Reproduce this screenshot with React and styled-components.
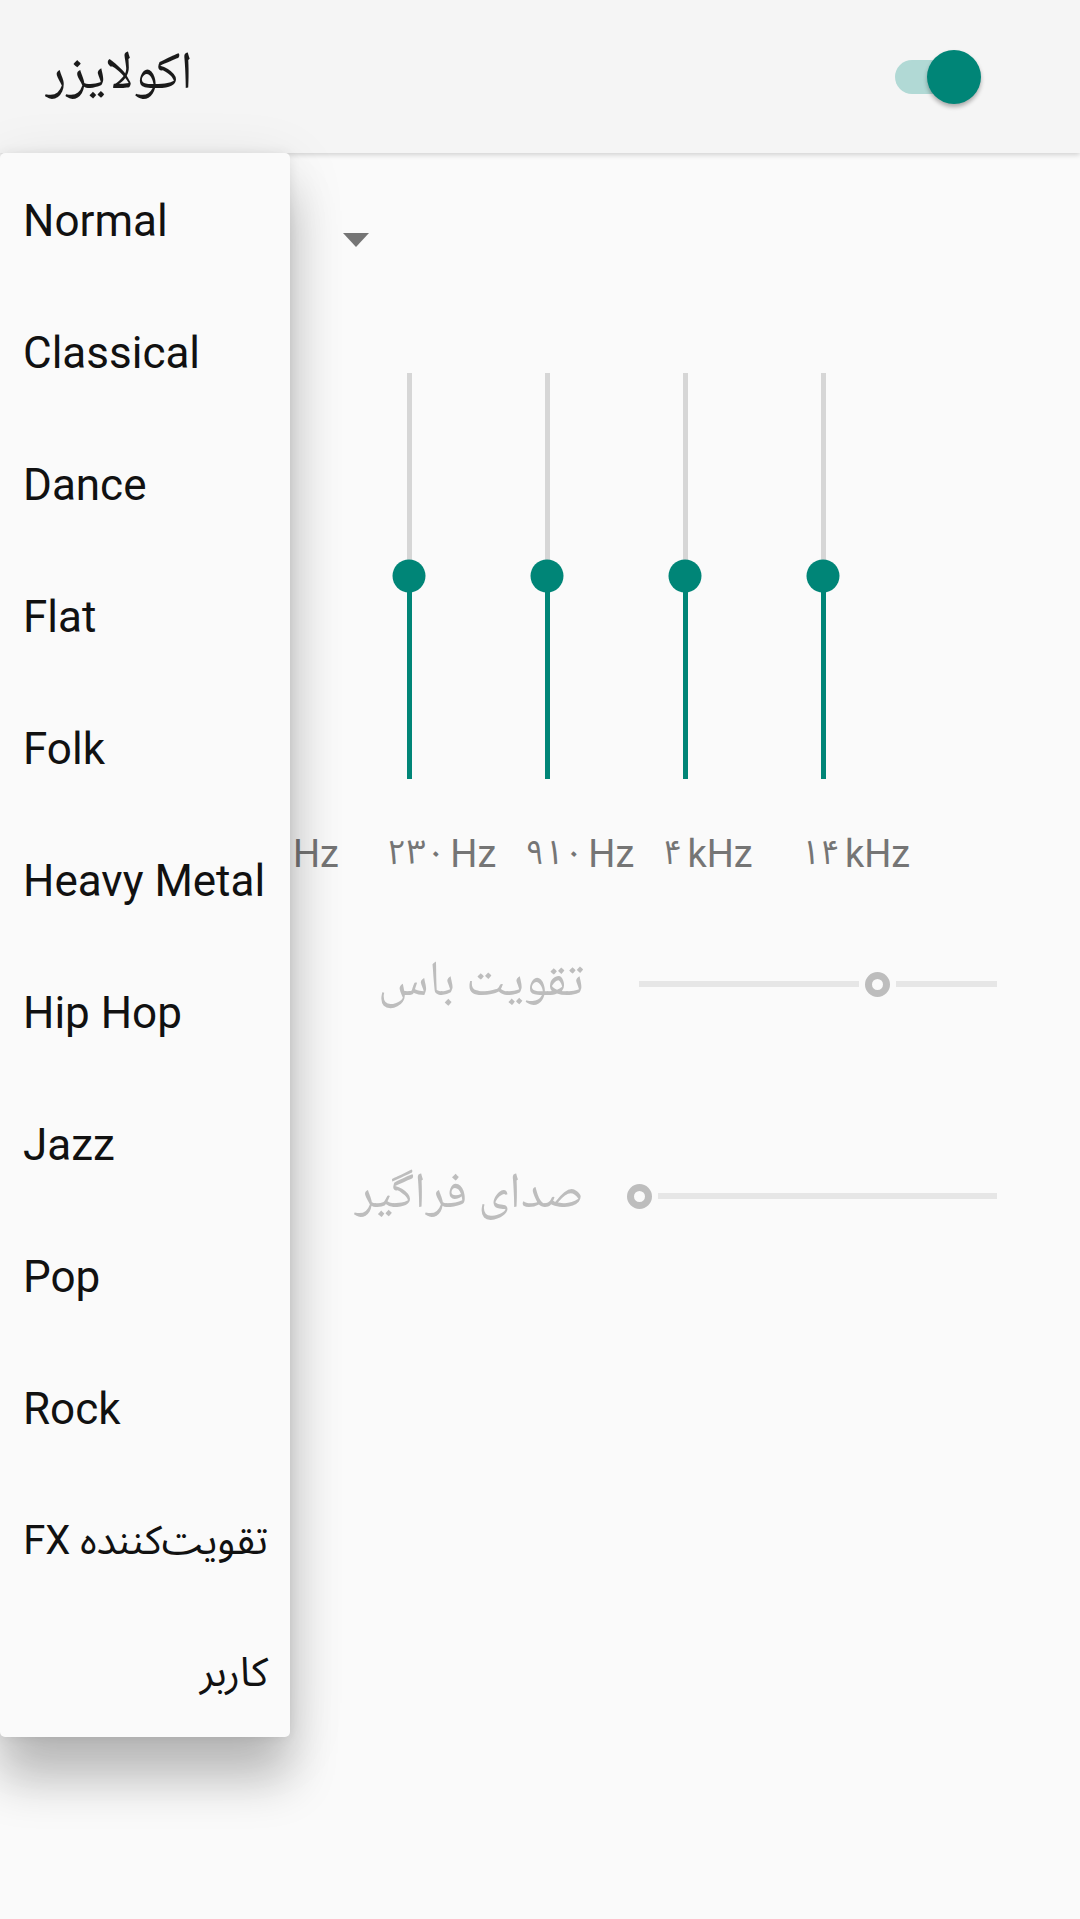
import styled, { createGlobalStyle } from "styled-components";

const TEAL = "#008577";

const GlobalStyle = createGlobalStyle`
  html, body {
    margin: 0;
    padding: 0;
    background: #fafafa;
  }
  body {
    font-family: Roboto, "Noto Sans", "Noto Sans Arabic", "DejaVu Sans", sans-serif;
  }
  * {
    box-sizing: border-box;
  }
`;

const Screen = styled.div`
  position: relative;
  min-height: 1919px;
  background: #fafafa;
  overflow: hidden;
`;

const AppBar = styled.header`
  position: relative;
  z-index: 1;
  height: 153px;
  display: flex;
  align-items: center;
  justify-content: space-between;
  padding: 0 99px 0 46px;
  background: #f5f5f5;
  box-shadow: 0 2px 5px rgba(0, 0, 0, 0.16);
`;

const Title = styled.h1`
  margin: 0;
  direction: rtl;
  font-family: "Noto Naskh Arabic", "Noto Sans Arabic", "DejaVu Sans", sans-serif;
  font-size: 53px;
  font-weight: 400;
  color: #1a1a1a;
`;

const Switch = styled.div`
  position: relative;
  width: 86px;
  height: 54px;
  display: flex;
  align-items: center;
`;

const SwitchTrack = styled.div`
  width: 80px;
  height: 34px;
  border-radius: 17px;
  background: #b1d9d5;
`;

const SwitchThumb = styled.div`
  position: absolute;
  right: 0;
  top: 0;
  width: 54px;
  height: 54px;
  border-radius: 50%;
  background: ${TEAL};
  box-shadow: 0 3px 4px rgba(0, 0, 0, 0.3);
`;

const Content = styled.main`
  display: flex;
  flex-direction: column;
`;

const SpinnerRow = styled.div`
  height: 174px;
  display: flex;
  align-items: center;
  padding-left: 343px;
`;

const Caret = styled.span`
  width: 0;
  height: 0;
  border-left: 13px solid transparent;
  border-right: 13px solid transparent;
  border-top: 14px solid #757575;
`;

const Bands = styled.div`
  margin-top: 46px;
  display: flex;
  padding-left: 202px;
`;

const Band = styled.div`
  width: 138px;
  display: flex;
  flex-direction: column;
`;

const VTrack = styled.div`
  position: relative;
  width: 5px;
  height: 406px;
  margin: 0 auto;
  display: flex;
  flex-direction: column;
`;

const VUpper = styled.div`
  flex: 1;
  background: #d6d6d6;
`;

const VLower = styled.div`
  height: ${(p) => p.$level * 100}%;
  background: ${TEAL};
`;

const VThumb = styled.div`
  position: absolute;
  left: 50%;
  bottom: ${(p) => p.$level * 100}%;
  width: 33px;
  height: 33px;
  border-radius: 50%;
  background: ${TEAL};
  transform: translate(-50%, 50%);
`;

const BandLabel = styled.div`
  margin-top: 50px;
  padding-left: 47px;
  font-size: 38px;
  line-height: 46px;
  color: #757575;
  white-space: nowrap;
`;

const Digits = styled.span`
  font-size: 34px;
  letter-spacing: -3px;
  vertical-align: 3px;
  margin-right: 5px;
`;

const EffectRow = styled.div`
  height: 100px;
  margin-top: ${(p) => p.$gap}px;
  display: flex;
  align-items: center;
  padding-left: 200px;
`;

const EffectLabel = styled.div`
  width: 384px;
  margin-right: 55px;
  direction: rtl;
  text-align: right;
  font-family: "Noto Naskh Arabic", "Noto Sans Arabic", "DejaVu Sans", sans-serif;
  font-size: 50px;
  color: #bdbdbd;
  white-space: nowrap;
`;

const SeekBar = styled.div`
  width: 358px;
  height: 26px;
  display: flex;
  align-items: center;
`;

const SeekLine = styled.div`
  height: 6px;
  background: #e6e6e6;
  flex: ${(p) => (p.$grow ? 1 : "none")};
`;

const SeekThumb = styled.div`
  flex-shrink: 0;
  width: 25px;
  height: 25px;
  border-radius: 50%;
  border: 7px solid #bdbdbd;
`;

const Menu = styled.ul`
  position: absolute;
  z-index: 2;
  top: 153px;
  left: 0;
  width: 290px;
  margin: 0;
  padding: 0;
  list-style: none;
  background: #fafafa;
  border-radius: 5px;
  box-shadow: 0 44px 48px rgba(0, 0, 0, 0.22), 0 12px 60px rgba(0, 0, 0, 0.1),
    0 0 12px rgba(0, 0, 0, 0.08);
`;

const MenuItem = styled.li`
  height: 132px;
  padding-top: 4px;
  display: flex;
  align-items: center;
  justify-content: flex-start;
  direction: ${(p) => (p.$rtl ? "rtl" : "ltr")};
  padding-left: ${(p) => (p.$rtl ? 0 : 23)}px;
  padding-right: ${(p) => (p.$rtl ? 22 : 0)}px;
  font-size: ${(p) => (p.$rtl ? 40 : 44)}px;
  color: #111;
  white-space: nowrap;
`;

const presets = [
  { name: "Normal" },
  { name: "Classical" },
  { name: "Dance" },
  { name: "Flat" },
  { name: "Folk" },
  { name: "Heavy Metal" },
  { name: "Hip Hop" },
  { name: "Jazz" },
  { name: "Pop" },
  { name: "Rock" },
  { name: "تقویت‌کننده FX", rtl: true },
  { name: "کاربر", rtl: true },
];

const bands = [
  { num: "۶۰", unit: "Hz", level: 0.5 },
  { num: "۲۳۰", unit: "Hz", level: 0.5 },
  { num: "۹۱۰", unit: "Hz", level: 0.5 },
  { num: "۴", unit: "kHz", level: 0.5 },
  { num: "۱۴", unit: "kHz", level: 0.5 },
];

function Seek({ value }) {
  const W = 358;
  const R = 12.5;
  const GAP = 6;
  const center = value * W;
  const before = center - R - GAP;
  return (
    <SeekBar>
      {before > 0 && <SeekLine style={{ width: before }} />}
      <SeekThumb style={{ marginLeft: before > 0 ? GAP : center - R }} />
      <SeekLine $grow style={{ marginLeft: GAP }} />
    </SeekBar>
  );
}

export default function App() {
  return (
    <Screen>
      <GlobalStyle />
      <AppBar>
        <Title>اکولایزر</Title>
        <Switch>
          <SwitchTrack />
          <SwitchThumb />
        </Switch>
      </AppBar>

      <Content>
        <SpinnerRow>
          <Caret />
        </SpinnerRow>

        <Bands>
          {bands.map((b) => (
            <Band key={b.num}>
              <VTrack>
                <VUpper />
                <VLower $level={b.level} />
                <VThumb $level={b.level} />
              </VTrack>
              <BandLabel>
                <Digits>{b.num}</Digits>
                {b.unit}
              </BandLabel>
            </Band>
          ))}
        </Bands>

        <EffectRow $gap={57}>
          <EffectLabel>تقویت باس</EffectLabel>
          <Seek value={0.665} />
        </EffectRow>
        <EffectRow $gap={112}>
          <EffectLabel>صدای فراگیر</EffectLabel>
          <Seek value={0} />
        </EffectRow>
      </Content>

      <Menu>
        {presets.map((p) => (
          <MenuItem key={p.name} $rtl={p.rtl}>
            {p.name}
          </MenuItem>
        ))}
      </Menu>
    </Screen>
  );
}
